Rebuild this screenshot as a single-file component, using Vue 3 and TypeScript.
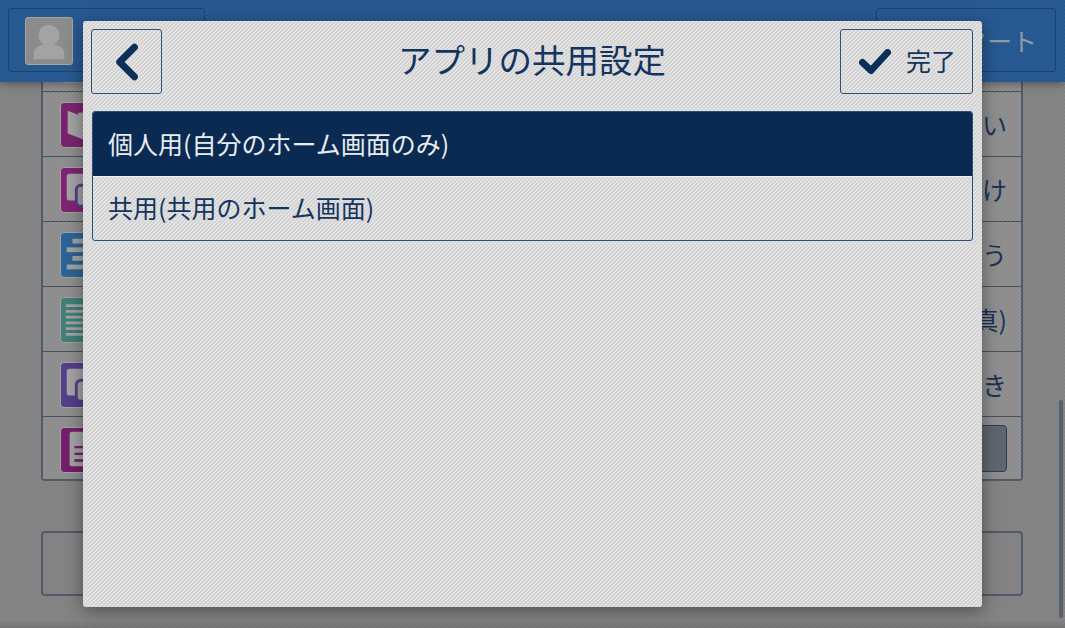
<script setup lang="ts">
interface Row { color: string; kind: string; tail: string }
const rows: Row[] = [
  { color: '#8a8a8a', kind: 'none', tail: '' },
  { color: '#7a2470', kind: 'book', tail: 'い' },
  { color: '#802474', kind: 'copy', tail: 'け' },
  { color: '#2b6496', kind: 'bars', tail: 'う' },
  { color: '#417f78', kind: 'lines', tail: '写真)' },
  { color: '#553e8a', kind: 'copy', tail: 'き' },
  { color: '#751e6b', kind: 'doc', tail: '' },
]
</script>

<template>
  <div class="screen">
    <header class="top">
      <div class="user">
        <div class="avatar">
          <svg viewBox="0 0 48 48" width="46" height="46">
            <circle cx="24" cy="18" r="11" fill="#a3a3a3" />
            <path d="M8 43v-6c0-5 5-8 10-9h12c5 1 10 4 10 9v6z" fill="#a3a3a3" />
          </svg>
        </div>
      </div>
      <div class="start">スタート</div>
    </header>

    <main class="content">
      <ul class="list">
        <li v-for="(row, i) in rows" :key="i" class="row">
          <span class="icon" :style="{ background: row.color }">
            <svg v-if="row.kind === 'book'" viewBox="0 0 46 46" width="44" height="44">
              <path d="M7 8l16 6v24L7 32z" fill="#a3a3a3" />
              <rect x="18" y="10" width="20" height="26" fill="#a3a3a3" />
            </svg>
            <svg v-else-if="row.kind === 'copy'" viewBox="0 0 46 46" width="44" height="44">
              <rect x="6" y="6" width="24" height="28" rx="3" fill="#a3a3a3" />
              <rect x="16" y="18" width="22" height="22" rx="5" fill="#a3a3a3" stroke="currentColor" stroke-width="3" />
            </svg>
            <svg v-else-if="row.kind === 'bars'" viewBox="0 0 46 46" width="44" height="44">
              <rect x="12" y="6" width="28" height="5" fill="#a3a3a3" />
              <rect x="6" y="15" width="34" height="5" fill="#a3a3a3" />
              <rect x="12" y="24" width="28" height="5" fill="#a3a3a3" />
              <rect x="6" y="33" width="34" height="5" fill="#a3a3a3" />
            </svg>
            <svg v-else-if="row.kind === 'lines'" viewBox="0 0 46 46" width="44" height="44">
              <path d="M5 8h34M5 14h34M5 20h34M5 26h34M5 32h24M5 38h24" stroke="#a3a3a3" stroke-width="3" fill="none" />
            </svg>
            <svg v-else-if="row.kind === 'doc'" viewBox="0 0 46 46" width="44" height="44">
              <rect x="9" y="4" width="30" height="36" rx="2" fill="#a3a3a3" />
              <path d="M14 20h22M14 27h22M14 34h22" stroke="#751e6b" stroke-width="2.5" />
            </svg>
          </span>
          <span class="tail">{{ row.tail }}</span>
          <span v-if="i === rows.length - 1" class="action"></span>
        </li>
      </ul>
      <div class="foot"></div>
    </main>
    <div class="scroll"></div>
    <div class="bottom-fade"></div>

    <section class="modal">
      <div class="modal-head">
        <button class="btn back" type="button" aria-label="戻る">
          <svg viewBox="0 0 24 36" width="26" height="38">
            <path d="M20 4L6 18l14 14" fill="none" stroke="#0c2f5a" stroke-width="6.5" stroke-linecap="round" stroke-linejoin="round" />
          </svg>
        </button>
        <h1 class="title">アプリの共用設定</h1>
        <button class="btn done" type="button">
          <svg viewBox="0 0 32 26" width="32" height="26">
            <path d="M3.5 13.5L12 21.500 28.500 3.500" fill="none" stroke="#0c2f5a" stroke-width="7" stroke-linecap="round" stroke-linejoin="round" />
          </svg>
          <span class="done-label">完了</span>
        </button>
      </div>
      <ul class="options">
        <li class="option selected">個人用(自分のホーム画面のみ)</li>
        <li class="option">共用(共用のホーム画面)</li>
      </ul>
    </section>
  </div>
</template>

<style scoped>
.screen {
  position: relative;
  width: 1065px;
  height: 628px;
  overflow: hidden;
  font-family: "Noto Sans CJK JP", "Noto Sans", sans-serif;
  color: #14345e;
  background: repeating-linear-gradient(-45deg, #7f7f7f 0 1.414px, #878787 1.414px 2.828px);
}
.top {
  position: relative;
  z-index: 2;
  height: 82px;
  box-sizing: border-box;
  padding: 8px 9px 0 8px;
  display: flex;
  justify-content: space-between;
  background: repeating-linear-gradient(-45deg, #24558c 0 1.414px, #2b5d95 1.414px 2.828px);
  box-shadow: 0 2px 8px rgba(0, 0, 0, 0.35);
}
.user, .start {
  box-sizing: border-box;
  height: 64px;
  border: 1px solid #1b4272;
  border-radius: 3px;
}
.user {
  width: 197px;
  padding: 8px 16px;
}
.avatar {
  width: 48px;
  height: 48px;
  border-radius: 3px;
  background: #8b8b8b;
  border: 1px solid #a5a5a5;
  box-sizing: border-box;
  overflow: hidden;
}
.avatar svg { display: block; }
.start {
  width: 180px;
  padding-right: 18px;
  font-size: 25px;
  line-height: 63px;
  text-align: right;
  color: #8f9aa8;
  white-space: nowrap;
}
.content {
  padding: 0 42px 0 41px;
  margin-top: -55px;
}
.list {
  list-style: none;
  margin: 0;
  padding: 0;
  border: solid #505b68;
  border-width: 0 2px 2px;
  border-radius: 0 0 4px 4px;
}
.row {
  height: 65px;
  box-sizing: border-box;
  display: flex;
  align-items: center;
  justify-content: flex-end;
  padding: 0 14px 0 16px;
  border-bottom: 1px solid #46525f;
  position: relative;
  background: repeating-linear-gradient(-45deg, #8a8a8a 0 1.414px, #929292 1.414px 2.828px);
}
.row:last-child { border-bottom: 0; height: 62px; }
.icon {
  position: absolute;
  left: 17px;
  top: 10px;
  width: 46px;
  height: 46px;
  box-sizing: border-box;
  border: 1px solid #a3a3a3;
  border-radius: 4px;
  color: #553e8a;
}
.icon svg { display: block; }
.tail {
  font-size: 25px;
  line-height: 1;
  color: #1a3353;
}
.action {
  width: 130px;
  height: 47px;
  box-sizing: border-box;
  background: #60666f;
  border: 1px solid #2f3e52;
  border-radius: 4px;
}
.foot {
  box-sizing: border-box;
  height: 65px;
  margin-top: 50px;
  border: 2px solid #505b68;
  border-radius: 4px;
}
.scroll {
  position: absolute;
  left: 1059px;
  top: 400px;
  width: 4px;
  height: 218px;
  border-radius: 2px;
  background: #58616e;
}
.bottom-fade {
  position: absolute;
  left: 0;
  right: 0;
  bottom: 0;
  height: 8px;
  background: linear-gradient(rgba(0, 0, 0, 0), rgba(0, 0, 0, 0.12));
}
.modal {
  position: absolute;
  z-index: 3;
  left: 83px;
  top: 21px;
  width: 899px;
  height: 586px;
  box-sizing: border-box;
  padding: 8px 9px 0 8px;
  border-radius: 3px;
  background: repeating-linear-gradient(-45deg, #d2d2d2 0 1.414px, #e3e3e3 1.414px 2.828px);
  box-shadow: 0 4px 18px rgba(0, 0, 0, 0.4);
}
.modal-head {
  display: grid;
  grid-template-columns: 1fr auto 1fr;
  align-items: center;
  height: 65px;
}
.btn {
  height: 65px;
  box-sizing: border-box;
  padding: 0;
  display: flex;
  align-items: center;
  justify-content: center;
  background: transparent;
  border: 1px solid #2f4f76;
  border-radius: 3px;
  font-family: inherit;
  color: #14345e;
}
.back { width: 71px; padding-right: 2px; justify-self: start; }
.done { width: 133px; gap: 15px; font-size: 25px; line-height: 1; padding-left: 2px; justify-self: end; }
.done-label { margin-top: -3px; }
.title {
  margin: 0;
  padding-bottom: 5px;
  font-size: 33.5px;
  font-weight: 400;
  line-height: 1;
  color: #12345e;
}
.options {
  list-style: none;
  margin: 17px 0 0 1px;
  padding: 0;
  box-sizing: border-box;
  border: 1px solid #2f4f76;
  border-radius: 3px;
  overflow: hidden;
}
.option {
  height: 63px;
  box-sizing: border-box;
  padding: 0 0 2px 15px;
  display: flex;
  align-items: center;
  font-size: 25px;
  line-height: 1;
  color: #14345e;
}
.selected {
  height: 65px;
  background: #0a2a52;
  color: #e9edf2;
  border-bottom: 1px solid #f0f0f0;
}
</style>

<style>
html, body { margin: 0; overflow: hidden; }
</style>
